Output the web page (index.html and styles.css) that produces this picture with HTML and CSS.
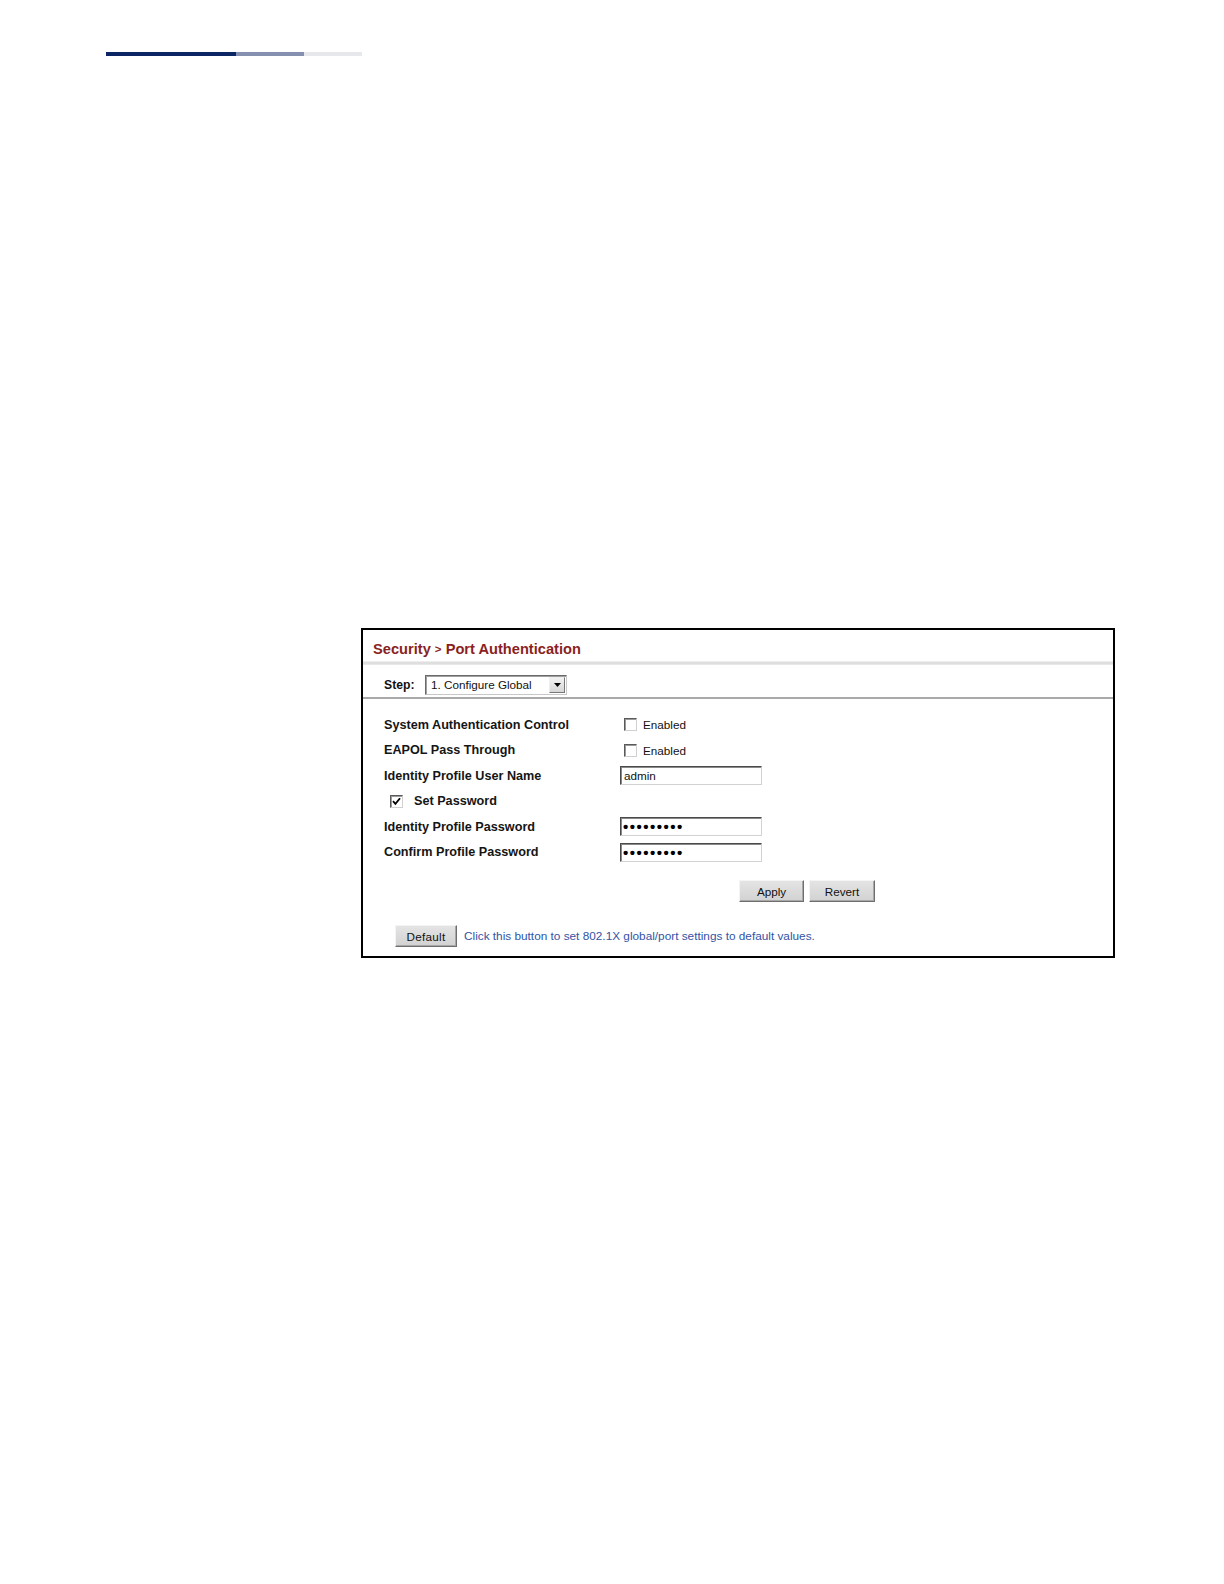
FILE: index.html
```html
<!DOCTYPE html>
<html>
<head>
<meta charset="utf-8">
<link rel="stylesheet" href="styles.css">
</head>
<body>
<div class="topbar"><span class="seg seg-dark"></span><span class="seg seg-mid"></span><span class="seg seg-light"></span></div>

<div class="figure">
  <div class="title">Security <span class="gt">&gt;</span> Port Authentication</div>
  <div class="shadow"></div>
  <div class="step-row">
    <span class="step-label">Step:</span>
    <div class="select">
      <span class="select-text">1. Configure Global</span>
      <span class="select-btn"><svg width="7" height="4" viewBox="0 0 7 4"><path d="M0 0h7L3.5 4z" fill="#000"/></svg></span>
    </div>
  </div>
  <div class="sep"></div>

  <div class="form">
    <div class="row">
      <span class="label">System Authentication Control</span>
      <span class="field check-field"><span class="cb"></span><span class="cb-text">Enabled</span></span>
    </div>
    <div class="row">
      <span class="label">EAPOL Pass Through</span>
      <span class="field check-field"><span class="cb"></span><span class="cb-text">Enabled</span></span>
    </div>
    <div class="row">
      <span class="label">Identity Profile User Name</span>
      <span class="field"><span class="input">admin</span></span>
    </div>
    <div class="row">
      <span class="label label-check"><span class="cb cb-checked"><svg width="9" height="9" viewBox="0 0 9 9"><path d="M1 4.2 3.4 6.8 8 1.2" fill="none" stroke="#000" stroke-width="1.8"/></svg></span><span class="set-text">Set Password</span></span>
    </div>
    <div class="row">
      <span class="label">Identity Profile Password</span>
      <span class="field"><span class="input pw">•••••••••</span></span>
    </div>
    <div class="row">
      <span class="label">Confirm Profile Password</span>
      <span class="field"><span class="input pw">•••••••••</span></span>
    </div>
  </div>

  <div class="actions">
    <span class="btn btn-apply">Apply</span>
    <span class="btn btn-revert">Revert</span>
  </div>

  <div class="default-row">
    <span class="btn btn-default">Default</span>
    <span class="hint">Click this button to set 802.1X global/port settings to default values.</span>
  </div>
</div>
</body>
</html>
```

FILE: styles.css
```css
html, body {
  margin: 0;
  padding: 0;
  background: #ffffff;
}

body {
  font-family: "Liberation Sans", Arial, sans-serif;
  color: #111;
}

.topbar {
  display: flex;
  margin: 52px 0 0 106px;
  height: 4px;
}

.seg { display: block; height: 4px; }
.seg-dark { width: 130px; background: #0b2663; }
.seg-mid { width: 68px; background: #8590b0; }
.seg-light { width: 58px; background: #e7e8eb; }

.figure {
  box-sizing: border-box;
  margin: 572px 0 0 361px;
  width: 754px;
  height: 330px;
  border: 2px solid #000;
  background: #fff;
}

.title {
  height: 31px;
  box-sizing: border-box;
  padding: 10px 0 0 10px;
  line-height: 18px;
  font-size: 14.65px;
  font-weight: bold;
  color: #8a1f22;
}

.title .gt {
  font-size: 11.5px;
  vertical-align: 1px;
}

.shadow {
  height: 4px;
  background: linear-gradient(#f3f3f3, #d9d9d9 50%, #ededed);
}

.step-row {
  display: flex;
  align-items: flex-start;
  height: 32px;
  box-sizing: border-box;
  padding: 9.5px 0 0 21px;
}

.step-label {
  font-size: 12.2px;
  font-weight: bold;
  width: 41px;
  line-height: 20px;
}

.select {
  box-sizing: border-box;
  width: 142px;
  height: 20px;
  display: flex;
  align-items: center;
  justify-content: space-between;
  border: 1px solid;
  border-color: #6a6a6a #c8c8c8 #c8c8c8 #6a6a6a;
  box-shadow: inset 1px 1px 0 #a0a0a0;
  background: #fff;
  padding: 0 1px 0 5px;
}

.select-text {
  font-size: 11.7px;
  color: #111;
}

.select-btn {
  box-sizing: border-box;
  width: 16px;
  height: 16px;
  display: flex;
  align-items: center;
  justify-content: center;
  background: linear-gradient(#f2f2f2, #d6d6d6);
  border: 1px solid;
  border-color: #eee #777 #777 #eee;
}

.sep {
  height: 2px;
  background: #a9a9a9;
}

.form {
  padding: 13px 0 0 21px;
}

.row {
  display: flex;
  align-items: center;
  height: 25.5px;
}

.label {
  width: 236px;
  font-size: 12.65px;
  font-weight: bold;
  color: #151515;
}

.label-check {
  display: flex;
  align-items: center;
  padding-left: 6px;
  box-sizing: border-box;
}

.set-text {
  margin-left: 11px;
}

.field {
  display: flex;
  align-items: center;
}

.check-field {
  padding-left: 4px;
}

.cb {
  box-sizing: border-box;
  width: 13px;
  height: 13px;
  display: inline-flex;
  align-items: center;
  justify-content: center;
  border: 1px solid;
  border-color: #5a5a5a #d0d0d0 #d0d0d0 #5a5a5a;
  box-shadow: inset 1px 1px 0 #9a9a9a;
  background: #fff;
}

.cb-text {
  margin-left: 6px;
  font-size: 11.7px;
  color: #111;
}

.input {
  box-sizing: border-box;
  width: 142px;
  height: 19px;
  display: flex;
  align-items: center;
  border: 1px solid;
  border-color: #4a4a4a #d2d2d2 #d2d2d2 #4a4a4a;
  box-shadow: inset 1px 1px 0 #8a8a8a;
  padding-left: 3px;
  font-size: 11.7px;
  color: #111;
  background: #fff;
}

.input.pw {
  font-size: 15px;
  font-weight: bold;
  letter-spacing: 1.5px;
  color: #000;
  padding-left: 2px;
}

.actions {
  display: flex;
  gap: 5px;
  margin: 15px 0 0 376px;
}

.btn {
  box-sizing: border-box;
  height: 22px;
  display: inline-flex;
  align-items: center;
  justify-content: center;
  font-size: 11.7px;
  color: #111;
  background: linear-gradient(#e4e4e4, #d2d2d2);
  border: 1px solid;
  border-color: #f4f4f4 #6e6e6e #6e6e6e #f4f4f4;
  box-shadow: inset -1px -1px 0 #a8a8a8;
}

.btn-apply { width: 65px; }
.btn-revert { width: 66px; }
.btn-default { width: 62px; letter-spacing: 0.3px; }

.default-row {
  display: flex;
  align-items: center;
  margin: 23px 0 0 32px;
}

.hint {
  margin-left: 7px;
  font-size: 11.8px;
  color: #3353a6;
}
```
